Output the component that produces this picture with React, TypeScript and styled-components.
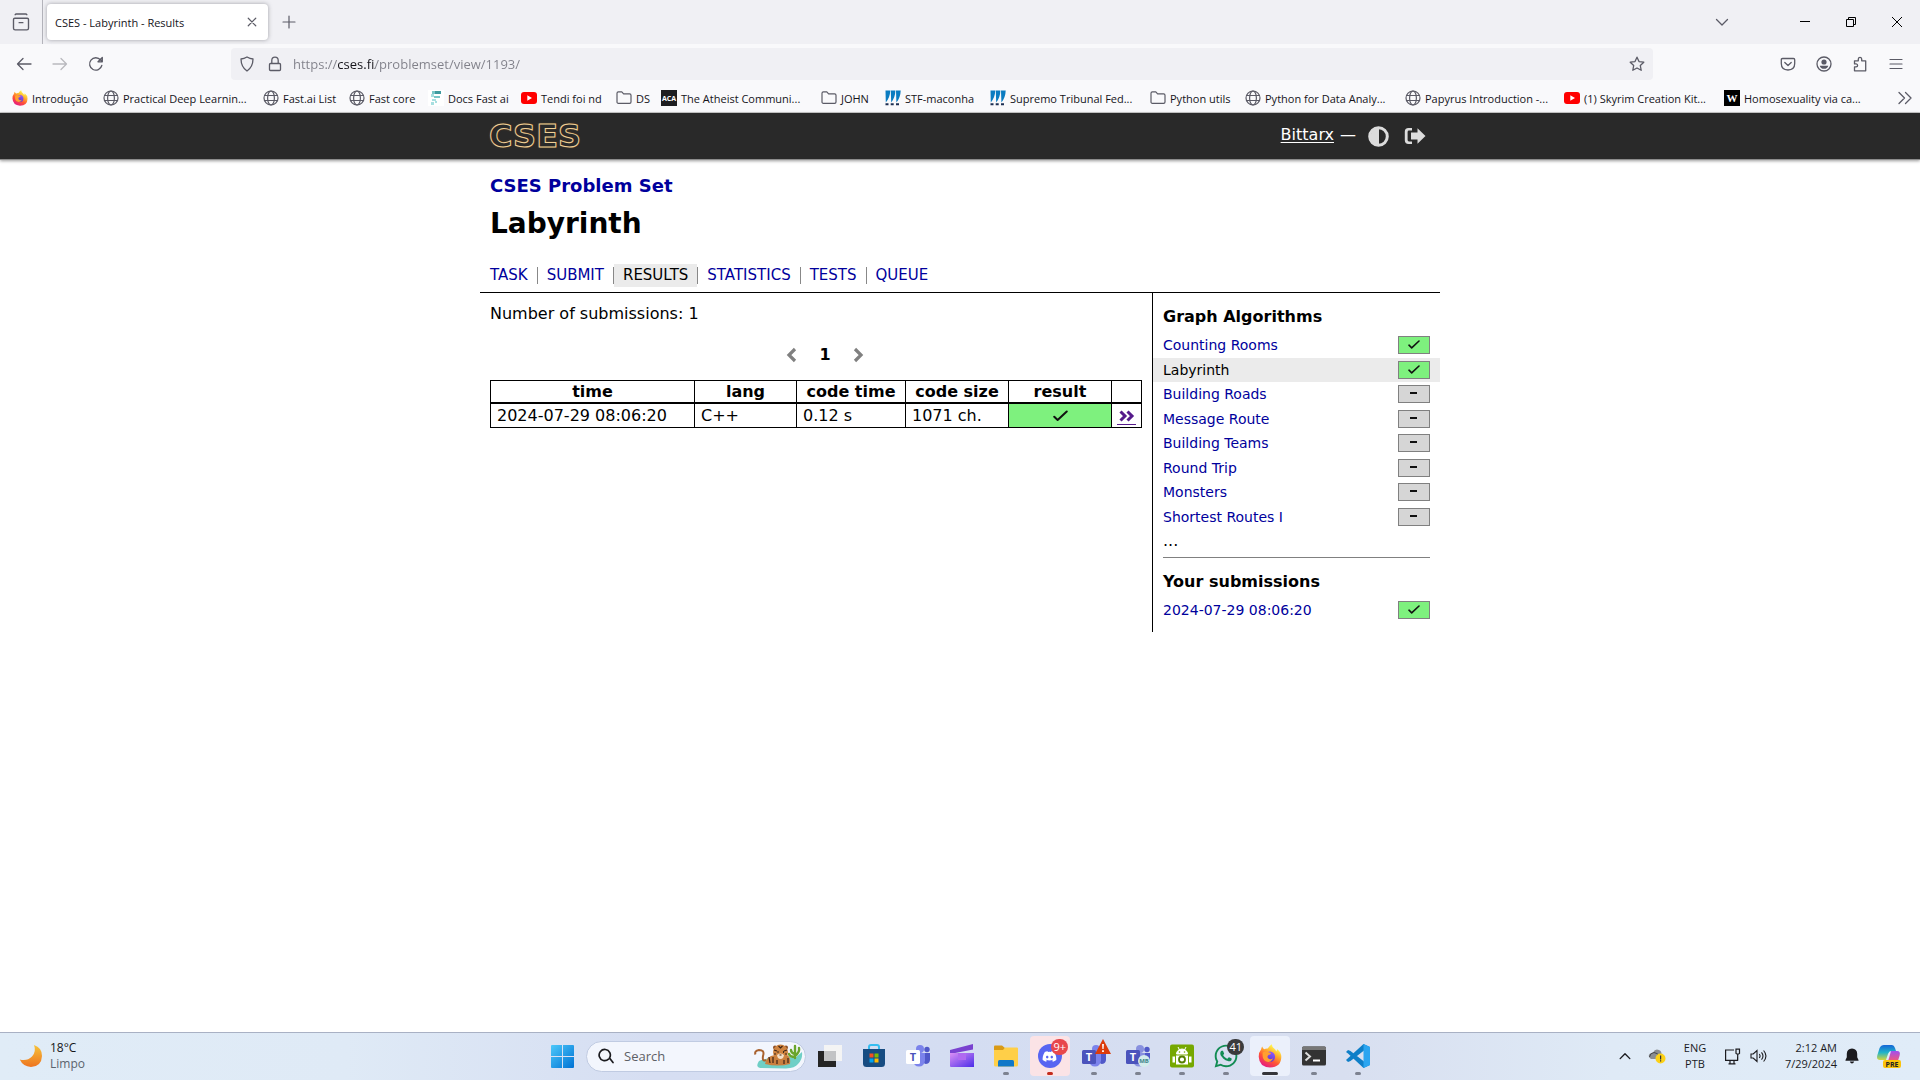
import React from "react";
import styled, { createGlobalStyle } from "styled-components";
import { FaDiscord, FaWhatsapp } from "react-icons/fa";

const ui = '"Open Sans", "Noto Sans", sans-serif';
const page = '"DejaVu Sans", Verdana, sans-serif';

const GlobalStyle = createGlobalStyle`
  *, *::before, *::after { box-sizing: border-box; }
  body { margin: 0; background: #fff; color: #000; font-family: ${page}; font-size: 16px; }
  button, input { font: inherit; color: inherit; }
  button { border: 0; padding: 0; background: none; }
  h1, h2, p, ul { margin: 0; padding: 0; }
  ul { list-style: none; }
  svg { display: block; flex: none; }
`;

const Screen = styled.div`
  min-height: 100vh;
  display: flex;
  flex-direction: column;
`;

/* ---------- browser chrome ---------- */

const Chrome = styled.header`
  font-family: ${ui};
  font-size: 12px;
  color: #15141a;
  background: #f9f9fb;
  border-bottom: 1px solid #cccccc;
`;

const TabStrip = styled.div`
  display: flex;
  align-items: center;
  height: 44px;
  background: #f0f0f4;
`;

const IconButton = styled.button<{ $w?: number; $dim?: boolean }>`
  display: flex;
  align-items: center;
  justify-content: center;
  width: ${(p) => p.$w ?? 36}px;
  height: 32px;
  color: ${(p) => (p.$dim ? "#b9b9be" : "#5b5b66")};
`;

const StripDivider = styled.span`
  width: 1px;
  align-self: stretch;
  background: #b4b4bb;
  margin-right: 4px;
`;

const Tab = styled.div`
  display: flex;
  align-items: center;
  justify-content: space-between;
  width: 221px;
  height: 36px;
  padding: 0 4px 0 8px;
  background: #fff;
  border-radius: 4px;
  box-shadow: 0 0 4px rgba(80, 80, 90, 0.5);
  font-size: 11px;
`;

const Spacer = styled.span`
  flex: 1;
`;

const WindowControls = styled.div`
  display: flex;
  margin-left: 27px;
`;

const NavBar = styled.div`
  display: flex;
  align-items: center;
  height: 40px;
  padding: 0 6px;
`;

const UrlBar = styled.form`
  flex: 1;
  display: flex;
  align-items: center;
  height: 32px;
  margin: 0 117px;
  padding: 0 2px;
  border-radius: 4px;
  background: #f0f0f4;
`;

const UrlInput = styled.input`
  flex: 1;
  min-width: 0;
  height: 30px;
  margin-left: 4px;
  padding: 0;
  border: 0;
  outline: 0;
  font-size: 13px;
  color: #808089;
  -webkit-text-fill-color: transparent;
  background: linear-gradient(90deg, #808089 45px, #15141a 45px 82px, #808089 82px);
  -webkit-background-clip: text;
  background-clip: text;
`;

const Bookmarks = styled.nav`
  display: flex;
  align-items: center;
  gap: 13px;
  height: 28px;
  padding: 0 12px;
  font-size: 11px;
`;

const Bookmark = styled.a<{ $w: number }>`
  display: flex;
  align-items: center;
  gap: 4px;
  width: ${(p) => p.$w}px;
  flex: none;
  color: inherit;
  text-decoration: none;
  white-space: nowrap;
`;

const Favicon = styled.span<{ $bg: string }>`
  display: flex;
  align-items: center;
  justify-content: center;
  width: 16px;
  height: 16px;
  flex: none;
  background: ${(p) => p.$bg};
  color: #fff;
`;

const stroke = {
  fill: "none",
  stroke: "currentColor",
  strokeLinecap: "round" as const,
  strokeLinejoin: "round" as const,
};

const Line = ({ d, size = 16, w = 1.3 }: { d: string; size?: number; w?: number }) => (
  <svg width={size} height={size} viewBox="0 0 16 16" {...stroke} strokeWidth={w} aria-hidden="true">
    <path d={d} />
  </svg>
);

const Globe = () => (
  <svg width="16" height="16" viewBox="0 0 16 16" {...stroke} stroke="#5b5b66" strokeWidth="1.2">
    <circle cx="8" cy="8" r="7" />
    <ellipse cx="8" cy="8" rx="3.4" ry="7" />
    <path d="M1.5 5.5h13M1.5 10.5h13" />
  </svg>
);

const Folder = () => (
  <svg width="16" height="16" viewBox="0 0 16 16" {...stroke} stroke="#5b5b66" strokeWidth="1.2">
    <path d="M1 3.2Q1 1.8 2.4 1.8h3.4l1.8 2h6Q15 3.8 15 5.2v6.7q0 1.4-1.4 1.4H2.4Q1 13.3 1 11.9z" />
  </svg>
);

const YouTube = () => (
  <svg width="16" height="16" viewBox="0 0 16 16">
    <rect y="2" width="16" height="12" rx="3" fill="#f00" />
    <path d="M6.300 5.300v5.400L11 8z" fill="#fff" />
  </svg>
);

const Court = () => (
  <svg width="16" height="16" viewBox="0 0 16 16" fill="#0b7cc1">
    <path d="M.5 .5h4.800Q5 7.500 .8 12.500zM5.800 .5h4.600q-.2 7-4.200 12zM11 .5h4.700q-.2 7-4.300 12z" />
    <path d="M.5 13.200h3v2h-3zM5.700 13.200h3v2h-3zM11 13.200h3v2h-3z" fill="#1c2e52" />
  </svg>
);

const FastDocs = () => (
  <svg width="16" height="16" viewBox="0 0 16 16">
    <path fill="#fff" d="M0 0h16v16H0z" />
    <path fill="#3e9b9f" d="M7 1h6v3H7z" />
    <path fill="#79c6c8" d="M4 1h3v3H4zM6 6h6v2H6z" />
    <path fill="#a8dfe0" d="M3 4h3v3H3zM4 9h4v2H4zM3 12h3v3H3zM7 11h2v2H7z" />
  </svg>
);

const Firefox = ({ size = 16 }: { size?: number }) => (
  <svg width={size} height={size} viewBox="0 0 24 24">
    <defs>
      <linearGradient id="ffBody" x1="0.8" y1="0.05" x2="0.25" y2="1">
        <stop offset="0.1" stopColor="#fff44f" />
        <stop offset="0.35" stopColor="#ffb02e" />
        <stop offset="0.62" stopColor="#ff5634" />
        <stop offset="1" stopColor="#e31587" />
      </linearGradient>
      <linearGradient id="ffCore" x1="0.7" y1="0" x2="0.3" y2="1">
        <stop offset="0" stopColor="#9059ff" />
        <stop offset="1" stopColor="#5b36c4" />
      </linearGradient>
    </defs>
    <path
      fill="url(#ffBody)"
      d="M3.200 5.200Q3.300 3.600 4.300 2.600q.3 1.700 1.900 2.600Q8 4.300 9.700 4.600 11 2.200 13.700 .3q.3 3 3 4.800 1.200 .8 1.400 2.400 1-.8 .9-2.500Q23.300 8 23.300 13 23.200 23 12 23.500 1.200 23 .7 12.800 .7 8 3.200 5.200z"
    />
    <circle cx="11.800" cy="12.700" r="5.300" fill="url(#ffCore)" />
    <path fill="#ffa02f" d="M4.600 8.500q3.200-2 6-.3 2.500 .2 2.400 1.500-.6 1.100-2.600 1.300-1.600 1.600-.3 3.200 2.200 2 5 .1-1.500 4-5.300 3.600-4.800-.6-5.200-5.900z" />
  </svg>
);

type Mark = { label: string; w: number; icon: React.ReactNode };

const bookmarks: Mark[] = [
  { label: "Introdução", w: 78, icon: <Firefox /> },
  { label: "Practical Deep Learnin...", w: 147, icon: <Globe /> },
  { label: "Fast.ai List", w: 73, icon: <Globe /> },
  { label: "Fast core", w: 66, icon: <Globe /> },
  { label: "Docs Fast ai", w: 80, icon: <FastDocs /> },
  { label: "Tendi foi nd", w: 82, icon: <YouTube /> },
  { label: "DS", w: 32, icon: <Folder /> },
  { label: "The Atheist Communi...", w: 147, icon: <Favicon $bg="#1d1d20"><svg width="16" height="16" viewBox="0 0 16 16"><text x="8" y="11" textAnchor="middle" fontFamily="Open Sans" fontWeight="700" fontSize="7" fill="#fff">ACA</text></svg></Favicon> },
  { label: "JOHN", w: 51, icon: <Folder /> },
  { label: "STF-maconha", w: 92, icon: <Court /> },
  { label: "Supremo Tribunal Fed...", w: 147, icon: <Court /> },
  { label: "Python utils", w: 82, icon: <Folder /> },
  { label: "Python for Data Analy...", w: 147, icon: <Globe /> },
  { label: "Papyrus Introduction -...", w: 146, icon: <Globe /> },
  { label: "(1) Skyrim Creation Kit...", w: 147, icon: <YouTube /> },
  { label: "Homosexuality via ca...", w: 147, icon: <Favicon $bg="#000"><svg width="16" height="16" viewBox="0 0 16 16"><text x="8" y="12" textAnchor="middle" fontFamily="Liberation Serif" fontWeight="700" fontSize="11" fill="#fff">W</text></svg></Favicon> },
];

const Browser = () => (
  <Chrome>
    <TabStrip>
      <IconButton $w={42} aria-label="Firefox view">
        <Line size={20} w={1.1} d="M3 5h10q1 0 1 1v7q0 1.300-1.300 1.300H3.300Q2 14.300 2 13V6q0-1 1-1zM3.300 2.200Q3.600 1.600 4.300 1.600h7.400q.7 0 1 .6M6.500 8.500h3" />
      </IconButton>
      <StripDivider />
      <Tab>
        <span>CSES - Labyrinth - Results</span>
        <IconButton $w={24} aria-label="Close tab">
          <Line size={12} w={1.6} d="M3 3l10 10M13 3L3 13" />
        </IconButton>
      </Tab>
      <IconButton $w={42} aria-label="New tab">
        <Line w={1.2} d="M8 2v12M2 8h12" />
      </IconButton>
      <Spacer />
      <IconButton $w={66} aria-label="List all tabs">
        <Line d="M2.500 5.500L8 11l5.500-5.500" />
      </IconButton>
      <WindowControls>
        <IconButton $w={46} aria-label="Minimize">
          <svg width="10" height="10"><path d="M0 4.500h10" stroke="#000" /></svg>
        </IconButton>
        <IconButton $w={46} aria-label="Restore">
          <svg width="10" height="10" fill="none" stroke="#000"><path d="M.5 2.500h7v7h-7zM2.500 2.500v-2h7v7h-2" /></svg>
        </IconButton>
        <IconButton $w={46} aria-label="Close window">
          <svg width="10" height="10" stroke="#000"><path d="M0 0l10 10M10 0L0 10" /></svg>
        </IconButton>
      </WindowControls>
    </TabStrip>
    <NavBar>
      <IconButton aria-label="Back"><Line d="M15 8H1.500M7 2.500L1.500 8 7 13.500" /></IconButton>
      <IconButton $dim aria-label="Forward"><Line d="M1 8h13.500M9 2.500L14.500 8 9 13.500" /></IconButton>
      <IconButton aria-label="Reload">
        <Line d="M13.800 9.500A6.200 6.200 0 1 1 12.600 4L14 5.500M14.300 1.500v4.300H10z" />
      </IconButton>
      <UrlBar>
        <IconButton $w={28} type="button" aria-label="Tracking protection">
          <Line d="M8 1q3 1.700 6 2-.1 8-6 12-5.900-4-6-12 3-.3 6-2z" />
        </IconButton>
        <IconButton $w={28} type="button" aria-label="Site information">
          <Line d="M3.500 7.500h9q1 0 1 1v5q0 1-1 1h-9q-1 0-1-1v-5q0-1 1-1zM4.800 7.200V4.400q0-3.200 3.200-3.200t3.200 3.200v2.800" />
        </IconButton>
        <UrlInput aria-label="Address" defaultValue="https://cses.fi/problemset/view/1193/" />
        <IconButton $w={28} type="button" aria-label="Bookmark this page">
          <Line d="M8 1.200l2 4.400 4.800 .6-3.500 3.300 .9 4.800L8 12l-4.200 2.300 .9-4.800L1.200 6.200 6 5.600z" />
        </IconButton>
      </UrlBar>
      <IconButton aria-label="Pocket">
        <Line d="M2.500 2.500h11q1.200 0 1.200 1.200v3.800q0 6.200-6.700 6.500Q1.300 13.700 1.300 7.500V3.700q0-1.200 1.200-1.200zM4.800 6.500L8 9.500l3.200-3" />
      </IconButton>
      <IconButton aria-label="Account">
        <svg width="16" height="16" viewBox="0 0 16 16">
          <circle cx="8" cy="8" r="7" {...stroke} strokeWidth="1.300" />
          <circle cx="8" cy="6" r="2.600" fill="currentColor" />
          <path fill="currentColor" d="M3.700 9.700h8.600q-.8 3.100-4.300 3.100T3.700 9.700z" />
        </svg>
      </IconButton>
      <IconButton aria-label="Extensions">
        <Line d="M2.500 14.800V10.900h1.600q1.500-.2 1.500-1.500T4.100 7.900H2.500V4.800h3.800V3q.2-1.700 1.700-1.700T9.700 3v1.800h4v10z" />
      </IconButton>
      <IconButton aria-label="Application menu"><Line w={1.2} d="M2 3.500h12M2 8h12M2 12.500h12" /></IconButton>
    </NavBar>
    <Bookmarks aria-label="Bookmarks">
      {bookmarks.map((b) => (
        <Bookmark key={b.label} href="#" $w={b.w}>
          {b.icon}
          <span>{b.label}</span>
        </Bookmark>
      ))}
      <Spacer />
      <IconButton $w={16} aria-label="More bookmarks">
        <Line d="M2 2.500L7.500 8 2 13.500M8.500 2.500L14 8l-5.500 5.500" />
      </IconButton>
    </Bookmarks>
  </Chrome>
);

/* ---------- page ---------- */

const SiteHeader = styled.header`
  background: #292929;
  border-bottom: 1px solid #8c8c8c;
  box-shadow: 0 1px 3px rgba(0, 0, 0, 0.4);
`;

const Column = styled.div`
  width: 100%;
  max-width: 960px;
  margin: 0 auto;
`;

const HeaderRow = styled(Column)`
  display: flex;
  align-items: center;
  justify-content: space-between;
  height: 46px;
  padding: 0 14px 0 9px;
`;

const Logo = styled.a`
  font-size: 32px;
  line-height: 46px;
  font-weight: 700;
  color: #292929;
  text-decoration: none;
  -webkit-text-stroke: 1px #f0cf95;
  text-shadow: 0 0 2px #a36a28;
`;

const Account = styled.div`
  display: flex;
  align-items: center;
  padding-bottom: 3px;
  color: #fff;
  gap: 6px;
`;

const UserLink = styled.a`
  color: inherit;
  text-underline-offset: 2px;
`;

const HeaderIcon = styled.button`
  color: #dcdcdc;
  margin: 3px 0 0 6px;
  & + & { margin-left: 9px; }
`;

const TitleBlock = styled(Column)`
  padding: 13px 10px 0;
`;

const SetTitle = styled.p`
  font-size: 18px;
  font-weight: 700;
  line-height: 26px;
  a { color: #00009c; text-decoration: none; }
`;

const Title = styled.h1`
  font-size: 28px;
  font-weight: 700;
  line-height: 50px;
`;

const Tabs = styled.ul`
  display: flex;
  align-items: center;
  padding-top: 15px;
  font-size: 15px;
  line-height: 23px;
  margin-left: -9px;
`;

const TabLink = styled.a<{ $on: boolean }>`
  display: block;
  padding: 0 9px;
  text-decoration: none;
  color: ${(p) => (p.$on ? "#000" : "#00009c")};
  background: ${(p) => (p.$on ? "#ebebeb" : "transparent")};
`;

const TabItem = styled.li`
  display: flex;
  align-items: center;
  & + &::before {
    content: "";
    width: 1px;
    height: 17px;
    background: #888;
  }
`;

const Body = styled(Column)`
  display: grid;
  grid-template-columns: minmax(0, 1fr) 288px;
  margin-top: 5px;
  border-top: 1px solid #000;
`;

const Content = styled.main`
  padding: 9px 10px 0;
  line-height: 24px;
`;

const Pager = styled.nav`
  display: flex;
  align-items: center;
  justify-content: center;
  gap: 22px;
  padding: 17px 0 13px 18px;
  font-weight: 700;
  color: #000;
  button { color: #808080; }
`;

const Table = styled.table`
  width: 100%;
  border-collapse: collapse;
  table-layout: fixed;
  th, td { border: 1px solid #000; white-space: nowrap; }
  th { padding: 1px 0 0; text-align: center; border-bottom-width: 2px; line-height: 20px; }
  td { height: 24px; padding: 1px 6px 0; text-align: left; line-height: 22px; }
`;

const ResultCell = styled.td`
  && { background: #7ef17e; }
  svg { margin: 0 auto; }
`;

const DetailsCell = styled.td`
  && { padding: 1px 5px 0; }
  a {
    display: block;
    color: #551a8b;
    border-bottom: 1px solid #551a8b;
  }
  svg { margin: 0 auto; }
`;

const Sidebar = styled.aside`
  border-left: 1px solid #000;
  padding-bottom: 10px;
  font-size: 14px;
`;

const SideHeading = styled.h2`
  padding: 12px 10px 4px;
  font-size: 16px;
  line-height: 24px;
`;

const ProblemList = styled.ul<{ $h: number }>`
  display: grid;
  grid-auto-rows: 1fr;
  height: ${(p) => p.$h}px;
`;

const ProblemRow = styled.li<{ $on?: boolean }>`
  display: flex;
  align-items: center;
  justify-content: space-between;
  padding: 0 10px;
  background: ${(p) => (p.$on ? "#ebebeb" : "transparent")};
  a {
    color: ${(p) => (p.$on ? "#000" : "#00009c")};
    text-decoration: none;
  }
`;

const Badge = styled.span<{ $done: boolean }>`
  display: flex;
  align-items: center;
  justify-content: center;
  width: 32px;
  height: 18px;
  border: 1px solid #808080;
  background: ${(p) => (p.$done ? "#7ef17e" : "#d6d6d6")};
`;

const More = styled.p`
  padding: 0 10px;
  line-height: 24px;
  font-size: 16px;
`;

const Rule = styled.hr`
  margin: 4px 10px 0;
  border: 0;
  border-top: 1px solid #808080;
`;

const Check = ({ size = 12 }: { size?: number }) => (
  <svg width={size} height={size} viewBox="0 0 12 12" {...stroke} stroke="#111" strokeWidth="1.600">
    <path d="M1 6.200l2.700 2.600L11 2" />
  </svg>
);

const Dash = () => (
  <svg width="8" height="4"><path d="M0 0h7v2H0z" fill="#111" /></svg>
);

const Status = ({ done }: { done: boolean }) => (
  <Badge $done={done} role="img" aria-label={done ? "Solved" : "Not attempted"}>
    {done ? <Check /> : <Dash />}
  </Badge>
);

const problems = [
  "Counting Rooms",
  "Labyrinth",
  "Building Roads",
  "Message Route",
  "Building Teams",
  "Round Trip",
  "Monsters",
  "Shortest Routes I",
];

const tabs = ["TASK", "SUBMIT", "RESULTS", "STATISTICS", "TESTS", "QUEUE"];

const Col = styled.col<{ $w: number }>`
  width: ${(p) => p.$w}px;
`;

const Site = () => (
  <>
    <SiteHeader>
      <HeaderRow>
        <Logo href="#">CSES</Logo>
        <Account>
          <UserLink href="#">Bittarx</UserLink>
          <span>—</span>
          <HeaderIcon aria-label="Toggle dark mode">
            <svg width="21" height="21" viewBox="0 0 21 21">
              <circle cx="10.500" cy="10.500" r="8.800" fill="none" stroke="currentColor" strokeWidth="3" />
              <path d="M11 2v17A8.500 8.500 0 0 1 11 2z" fill="currentColor" />
            </svg>
          </HeaderIcon>
          <HeaderIcon aria-label="Log out">
            <svg width="22" height="18" viewBox="0 0 22 18" fill="currentColor">
              <path d="M8 1v2.600H5Q3.600 3.600 3.600 5v8q0 1.400 1.400 1.400h3V17H4.500Q.8 17 .8 13.300V4.700Q.8 1 4.500 1z" />
              <path d="M13.500 1.200L21.500 9l-8 7.800v-4.300H7V5.500h6.500z" />
            </svg>
          </HeaderIcon>
        </Account>
      </HeaderRow>
    </SiteHeader>
    <TitleBlock>
      <SetTitle><a href="#">CSES Problem Set</a></SetTitle>
      <Title>Labyrinth</Title>
      <Tabs>
        {tabs.map((t) => (
          <TabItem key={t}>
            <TabLink href="#" $on={t === "RESULTS"}>{t}</TabLink>
          </TabItem>
        ))}
      </Tabs>
    </TitleBlock>
    <Body>
      <Content>
        <p>Number of submissions: 1</p>
        <Pager aria-label="Pages">
          <button aria-label="Previous page">
            <svg width="12" height="16" viewBox="0 0 12 16" fill="none" stroke="currentColor" strokeWidth="3.200"><path d="M10 2L4 8l6 6" /></svg>
          </button>
          <span>1</span>
          <button aria-label="Next page">
            <svg width="12" height="16" viewBox="0 0 12 16" fill="none" stroke="currentColor" strokeWidth="3.200"><path d="M2 2l6 6-6 6" /></svg>
          </button>
        </Pager>
        <Table>
          <colgroup>
            <Col $w={204} />
            <Col $w={102} />
            <Col $w={109} />
            <Col $w={103} />
            <Col $w={103} />
            <Col $w={30} />
          </colgroup>
          <thead>
            <tr>
              <th>time</th><th>lang</th><th>code time</th><th>code size</th><th>result</th><th />
            </tr>
          </thead>
          <tbody>
            <tr>
              <td>2024-07-29 08:06:20</td>
              <td>C++</td>
              <td>0.12 s</td>
              <td>1071 ch.</td>
              <ResultCell><Check size={15} /></ResultCell>
              <DetailsCell>
                <a href="#" aria-label="Submission details">
                  <svg width="16" height="16" viewBox="0 0 16 16" fill="none" stroke="currentColor" strokeWidth="3"><path d="M1.500 3.500L6 8l-4.500 4.500M8.500 3.500L13 8l-4.500 4.500" /></svg>
                </a>
              </DetailsCell>
            </tr>
          </tbody>
        </Table>
      </Content>
      <Sidebar>
        <SideHeading>Graph Algorithms</SideHeading>
        <ProblemList $h={196}>
          {problems.map((p, i) => (
            <ProblemRow key={p} $on={i === 1}>
              <a href="#">{p}</a>
              <Status done={i < 2} />
            </ProblemRow>
          ))}
        </ProblemList>
        <More>...</More>
        <Rule />
        <SideHeading>Your submissions</SideHeading>
        <ProblemList $h={24}>
          <ProblemRow>
            <a href="#">2024-07-29 08:06:20</a>
            <Status done />
          </ProblemRow>
        </ProblemList>
      </Sidebar>
    </Body>
  </>
);

/* ---------- taskbar ---------- */

const Taskbar = styled.footer`
  display: grid;
  grid-template-columns: 1fr auto 1fr;
  height: 48px;
  margin-top: auto;
  padding-bottom: 1px;
  border-top: 1px solid #a9b1c4;
  background: linear-gradient(90deg, #e0ecf7 0%, #dfeaf6 18%, #d6def2 34%, #d4ddf2 50%, #d8dff0 70%, #dfeaf6 84%, #e0ecf8 100%);
  font-family: ${ui};
  font-size: 12px;
  line-height: 16px;
  color: #1b1b1f;
`;

const Weather = styled.button`
  justify-self: start;
  display: flex;
  align-items: center;
  gap: 7px;
  padding-left: 19px;
  text-align: left;
  span { display: block; color: #5b636d; }
  span:first-child { color: #15171a; }
`;

const Apps = styled.div`
  display: flex;
  align-items: center;
`;

const AppButton = styled.button<{ $bg?: string; $dot?: string; $wide?: boolean }>`
  position: relative;
  display: flex;
  align-items: center;
  justify-content: center;
  width: 40px;
  height: 40px;
  margin: 0 2px;
  border-radius: 4px;
  background: ${(p) => p.$bg ?? "none"};
  &::after {
    content: "";
    position: absolute;
    bottom: 1px;
    left: 50%;
    width: ${(p) => (p.$wide ? 16 : 6)}px;
    height: 3px;
    border-radius: 2px;
    transform: translateX(-50%);
    background: ${(p) => p.$dot ?? "none"};
  }
`;

const Count = styled.span<{ $bg: string }>`
  position: absolute;
  top: 3px;
  right: 2px;
  min-width: 16px;
  height: 16px;
  border-radius: 8px;
  background: ${(p) => p.$bg};
  color: #fff;
  font-size: 11px;
  line-height: 15px;
  padding: 0 2px;
`;

const Alert = styled.span`
  position: absolute;
  top: 3px;
  right: 3px;
`;

const Search = styled.label`
  display: flex;
  align-items: center;
  width: 220px;
  height: 31px;
  margin: 0 2px;
  padding: 0 2px 0 11px;
  border: 1px solid #c0cbe2;
  border-radius: 16px;
  background: #f3f6fd;
  input {
    flex: 1;
    min-width: 0;
    margin-left: 10px;
    padding: 0;
    border: 0;
    outline: 0;
    background: none;
    font-size: 13px;
  }
  input::placeholder { color: #5d6066; opacity: 1; }
`;

const Tray = styled.div`
  justify-self: end;
  display: flex;
  align-items: center;
  padding-right: 9px;
`;

const TrayButton = styled.button<{ $w: number; $end?: boolean }>`
  display: flex;
  flex-direction: column;
  align-items: ${(p) => (p.$end ? "flex-end" : "center")};
  justify-content: center;
  width: ${(p) => p.$w}px;
  height: 40px;
  font-size: 11px;
`;

const Teams = ({ box = "#4b53bc", letter = "#fff", tint = "#7b83eb" }: { box?: string; letter?: string; tint?: string }) => (
  <svg width="26" height="24" viewBox="0 0 26 24">
    <circle cx="15" cy="5" r="4" fill={tint} />
    <circle cx="22" cy="5.500" r="2.700" fill="#5059c9" />
    <path d="M17 9h8v7q-.5 4-4.500 4L17 18z" fill="#5059c9" />
    <path d="M8 9h12v7.500q-.8 6-6 6t-6-6z" fill={tint} />
    <rect x="1" y="6" width="14" height="14" rx="1.500" fill={box} />
    <text x="8" y="17" textAnchor="middle" fontFamily="Open Sans" fontWeight="700" fontSize="11" fill={letter}>T</text>
  </svg>
);

const grey = "#7d8290";

const Desktop = () => (
  <Taskbar>
    <Weather>
      <svg width="24" height="24" viewBox="0 0 24 24">
        <defs><linearGradient id="moon" x1="0" y1="0" x2="0" y2="1"><stop stopColor="#f6c33a" /><stop offset="1" stopColor="#ee7420" /></linearGradient></defs>
        <path d="M15 1q8 2.500 8 11-.5 10.500-11 11Q4 22.500 .8 15.500 8 17.500 13 12.500q4.500-5 2-11.500z" fill="url(#moon)" />
      </svg>
      <div><span>18°C</span><span>Limpo</span></div>
    </Weather>
    <Apps>
      <AppButton aria-label="Start">
        <svg width="23" height="23" viewBox="0 0 23 23">
          <defs><linearGradient id="win" x1="0" y1="0" x2="1" y2="1"><stop stopColor="#4cc8fa" /><stop offset="1" stopColor="#0072d4" /></linearGradient></defs>
          <path fill="url(#win)" d="M0 1q0-1 1-1h10v11H0zM12 0h10q1 0 1 1v10H12zM0 12h11v11H1q-1 0-1-1zM12 12h11v10q0 1-1 1H12z" />
        </svg>
      </AppButton>
      <Search>
        <Line size={16} w={1.7} d="M10.500 11.200A5.600 5.600 0 1 1 11.500 10L15 14.500" />
        <input type="search" placeholder="Search" aria-label="Search" />
        <svg width="50" height="26" viewBox="0 0 50 26">
          <path d="M6 18q18-7 36-3l7-6q1 7-4 12-3 4-12 4.500L7 25q-5-1-1-7z" fill="#6fcfc6" />
          <path d="M42 15V3M38 7q0 3 4 4M46 5q1 4-4 8M36 11q1 3 6 3" stroke="#6aa52c" strokeWidth="2.400" fill="none" strokeLinecap="round" />
          <path d="M13 17Q9 19 10 13q2-6-4-6-5 1-3.500 4.500" fill="none" stroke="#a9622f" strokeWidth="2" />
          <path d="M12 21q1-8 10-9h12q4 2 3 9-12 3-25 0z" fill="#c97f3f" />
          <circle cx="22" cy="4.500" r="2" fill="#8a4c23" /><circle cx="33" cy="4.500" r="2" fill="#8a4c23" />
          <circle cx="27.500" cy="9" r="7.500" fill="#cf8441" />
          <path d="M24 12q3.500-3 7 0-.5 4-3.500 4T24 12z" fill="#f3e0c8" />
          <path d="M25.500 3l2 2 2-2M21 7l3 1M34 7l-3 1M21 11l2 0M34 11h-2M16 14l1 6M20 14l0 6M24 17v4M31 17v4M35 15v5M26.500 12h2" stroke="#3f2414" strokeWidth="1.200" fill="none" />
          <path d="M24.500 9h1M30 9h1" stroke="#111" strokeWidth="1.500" />
        </svg>
      </Search>
      <AppButton aria-label="Task view">
        <svg width="24" height="24" viewBox="0 0 24 24">
          <path d="M0 7h18v16H0z" fill="#252525" /><path d="M6 1h18v16H6z" fill="#f4f4f4" /><path d="M6 7h12v10H6z" fill="#c2c3c5" />
        </svg>
      </AppButton>
      <AppButton aria-label="Store">
        <svg width="24" height="24" viewBox="0 0 24 24">
          <path d="M7 6V3q0-2 2-2h6q2 0 2 2v3" fill="none" stroke="#36bdf0" strokeWidth="2" />
          <path d="M1 5h22v14.500q0 3.500-3.500 3.500h-15Q1 23 1 19.500z" fill="#174c82" />
          <path d="M7.500 9.500h4v4h-4z" fill="#f25022" /><path d="M12.500 9.500h4v4h-4z" fill="#7fba00" />
          <path d="M7.500 14.500h4v4h-4z" fill="#00a4ef" /><path d="M12.500 14.500h4v4h-4z" fill="#ffb900" />
        </svg>
      </AppButton>
      <AppButton aria-label="Teams"><Teams box="#fff" letter="#4b53bc" /></AppButton>
      <AppButton aria-label="Clipchamp">
        <svg width="24" height="24" viewBox="0 0 24 24">
          <defs><linearGradient id="clip" x1="0" y1="0" x2="1" y2="1"><stop stopColor="#dc8ff5" /><stop offset="1" stopColor="#4a2ee8" /></linearGradient></defs>
          <path d="M0 6L23 0v5.500L0 10z" fill="#7a42d0" /><path d="M0 9h24v14H1q-1 0-1-1z" fill="url(#clip)" /><path d="M8 9h8v7H8z" fill="#b06af0" />
        </svg>
      </AppButton>
      <AppButton $dot={grey} aria-label="File Explorer">
        <svg width="24" height="24" viewBox="0 0 24 24">
          <path d="M0 2.500Q0 1.500 1 1.500h7L11 4v6H0z" fill="#d99a16" /><path d="M0 6h9l2-2.500h12q1 0 1 1V21q0 1.500-1.500 1.500h-21Q0 22.500 0 21z" fill="#ffcf48" /><path d="M4 17.500q0-1.500 1.500-1.500h13q1.500 0 1.500 1.500v5H4z" fill="#1078c8" />
        </svg>
      </AppButton>
      <AppButton $bg="#fbe3e6" $dot="#c42b1c" aria-label="Discord">
        <svg width="24" height="24" viewBox="0 0 24 24"><circle cx="12" cy="12" r="12" fill="#5865f2" /><FaDiscord x="4" y="5" size={15} color="#fff" /></svg>
        <Count $bg="#e8474c">9+</Count>
      </AppButton>
      <AppButton $dot={grey} aria-label="Teams alert">
        <Teams />
        <Alert>
          <svg width="16" height="15" viewBox="0 0 16 15"><path d="M8 0l8 15H0z" fill="#dc3b0b" /><path d="M7.100 5h1.800l-.3 5H7.400zM7.100 11.200h1.800V13H7.100z" fill="#fff" /></svg>
        </Alert>
      </AppButton>
      <AppButton $dot={grey} aria-label="Teams classic">
        <svg width="26" height="24" viewBox="0 0 26 24"><Teams tint="#8890df" /><circle cx="19" cy="17" r="6" fill="#d4ecec" /><text x="19" y="19" textAnchor="middle" fontSize="6" fontWeight="700" fill="#3c8589">MB</text></svg>
      </AppButton>
      <AppButton $dot={grey} aria-label="Android tool">
        <svg width="24" height="24" viewBox="0 0 24 24">
          <rect y=".5" width="24" height="23" rx="2" fill="#76a800" />
          <path d="M6.500 10q.3-4.500 5.500-5 5.200 .5 5.500 5zM8 3l1.500 3M16 3l-1.500 3" fill="#fff" stroke="#fff" />
          <circle cx="9.500" cy="8" r=".8" fill="#76a800" /><circle cx="14.500" cy="8" r=".8" fill="#76a800" />
          <path d="M6 11.500h12v9H6zM2.500 12.500H5v6H2.500zM19 12.500h2.500v6H19z" fill="#fff" />
          <circle cx="12" cy="15.500" r="3" fill="#fff" stroke="#568000" strokeWidth="1.800" />
        </svg>
      </AppButton>
      <AppButton $dot={grey} aria-label="WhatsApp">
        <FaWhatsapp size={26} color="#128c54" />
        <Count $bg="#3a3a3c">41</Count>
      </AppButton>
      <AppButton $bg="#ebf0fb" $dot="#35353a" $wide aria-label="Firefox"><Firefox size={24} /></AppButton>
      <AppButton $dot={grey} aria-label="Terminal">
        <svg width="24" height="20" viewBox="0 0 24 20"><rect width="24" height="19" y=".5" rx="1.500" fill="#333" /><path d="M0 4V2Q0 .5 1.500 .5h21Q24 .5 24 2v2z" fill="#777" /><path d="M3.500 6.500L8 10.500l-4.500 4" fill="none" stroke="#ddd" strokeWidth="2" /><path d="M11 14.500h7" stroke="#fff" strokeWidth="2" /></svg>
      </AppButton>
      <AppButton $dot={grey} aria-label="Visual Studio Code">
        <svg width="24" height="24" viewBox="0 0 24 24">
          <path d="M17.500 0L24 3v18l-6.500 3L2 9.500 0 8l2-2 2.500 1L18 17.500v-11L4.500 17 2 18l-2-2z" fill="#0f7fc8" />
          <path d="M17.500 0L24 3v18l-6.500 3z" fill="#2ba5f0" />
        </svg>
      </AppButton>
    </Apps>
    <Tray>
      <TrayButton $w={28} aria-label="Show hidden icons"><Line size={14} w={1.6} d="M2.500 11L8 5.500l5.500 5.500" /></TrayButton>
      <TrayButton $w={36} aria-label="OneDrive">
        <svg width="18" height="16" viewBox="0 0 18 16"><path d="M3 11Q-.5 9 1.500 6 3 4.500 5 4.500 7 .5 11 2q2 .5 2.500 3v6z" fill="#8b8e92" /><path d="M1.500 9Q2 5 6 4.500q4 0 6 5" fill="none" stroke="#44474b" /><circle cx="12.500" cy="10.500" r="5" fill="#fcd116" /><path d="M12 7.500h1.200v4H12zM12 12.300h1.200v1.200H12z" fill="#333" /></svg>
      </TrayButton>
      <TrayButton $w={40}><span>ENG</span><span>PTB</span></TrayButton>
      <TrayButton $w={34} aria-label="Network">
        <svg width="17" height="17" viewBox="0 0 17 17" fill="none" stroke="#1b1b1f" strokeWidth="1.200"><path d="M10 2H1.600v10.400h12V9M4.500 15.800h7M6 12.500v3M10 12.500v3M12 1.200h3.500v4.200q-1.700 1.600-3.500 0zM13.700 6v6" /></svg>
      </TrayButton>
      <TrayButton $w={18} aria-label="Volume">
        <svg width="17" height="14" viewBox="0 0 17 14" fill="none" stroke="#1b1b1f" strokeWidth="1.100"><path d="M1 5h2.200L7 1.500v11L3.200 9H1zM9.300 5q1.500 2 0 4M11.500 3.300q3 3.700 0 7.400M13.600 1.500q4.700 5.500 0 11" /></svg>
      </TrayButton>
      <TrayButton $w={70} $end><span>2:12 AM</span><span>7/29/2024</span></TrayButton>
      <TrayButton $w={30} aria-label="Notifications">
        <svg width="14" height="16" viewBox="0 0 14 16" fill="#1b1b1f"><path d="M7 .5q5 .3 5.200 5.200v3.500L13.500 12v.7H.5V12l1.300-2.800V5.700Q2 .8 7 .5zM4.800 13.500h4.400Q8.500 15.500 7 15.500t-2.200-2z" /></svg>
      </TrayButton>
      <TrayButton $w={44} aria-label="Copilot">
        <svg width="24" height="24" viewBox="0 0 24 24">
          <defs>
            <linearGradient id="coA" x1="0" y1="0" x2="0" y2="1"><stop stopColor="#1566d8" /><stop offset="0.5" stopColor="#21b3c9" /><stop offset="1" stopColor="#d4d63c" /></linearGradient>
            <linearGradient id="coB" x1="0" y1="0" x2="0" y2="1"><stop stopColor="#a14ff0" /><stop offset="1" stopColor="#fa5b6a" /></linearGradient>
          </defs>
          <path d="M7 1h8q2 0 3 3l1 3h-5q-2 0-3 3l-2 6H3q-4 0-2.600-5l2.200-7Q4 1 7 1z" fill="url(#coA)" />
          <path d="M14 7h6q4 0 2.500 5l-2 6H9q2 0 3-4z" fill="url(#coB)" />
          <rect x="6" y="16" width="18" height="8" rx="2" fill="#fbc30c" />
          <text x="15" y="22.500" textAnchor="middle" fontSize="7" fontWeight="700" fontFamily="Open Sans" fill="#222">PRE</text>
        </svg>
      </TrayButton>
    </Tray>
  </Taskbar>
);

export default function App() {
  return (
    <Screen>
      <GlobalStyle />
      <Browser />
      <Site />
      <Desktop />
    </Screen>
  );
}
